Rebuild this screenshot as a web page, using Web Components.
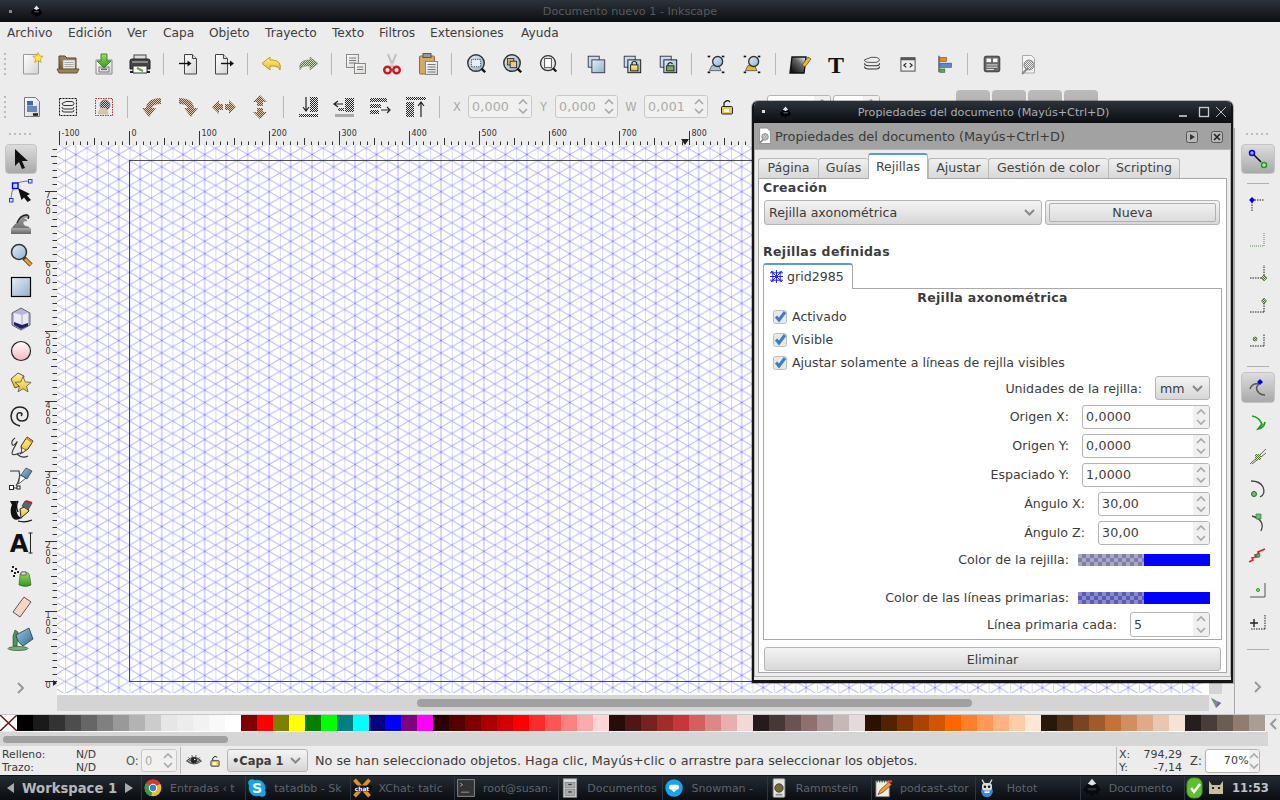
<!DOCTYPE html>
<html lang="es"><head><meta charset="utf-8"><title>Inkscape</title>
<style>
html,body{margin:0;padding:0;width:1280px;height:800px;overflow:hidden;background:#ececec;font-family:"DejaVu Sans",sans-serif;color:#3c3c3c}
</style></head><body>
<ink-app>
  <ink-titlebar>Documento nuevo 1 - Inkscape</ink-titlebar>
  <ink-menubar>
    <span style="width:61px">Archivo</span><span style="width:59px">Edición</span><span style="width:36px">Ver</span><span style="width:46px">Capa</span><span style="width:56px">Objeto</span><span style="width:67px">Trayecto</span><span style="width:47px">Texto</span><span style="width:51px">Filtros</span><span style="width:91px">Extensiones</span><span>Ayuda</span>
  </ink-menubar>
  <ink-toolbar>
    <ink-icon n="new"></ink-icon><ink-icon n="open"></ink-icon><ink-icon n="save"></ink-icon><ink-icon n="print"></ink-icon><ink-sep></ink-sep>
    <ink-icon n="import"></ink-icon><ink-icon n="export"></ink-icon><ink-sep></ink-sep>
    <ink-icon n="undo"></ink-icon><ink-icon n="redo"></ink-icon><ink-sep></ink-sep>
    <ink-icon n="copy"></ink-icon><ink-icon n="cut"></ink-icon><ink-icon n="paste"></ink-icon><ink-sep></ink-sep>
    <ink-icon n="zsel" sz="22"></ink-icon><ink-icon n="zdraw" sz="22"></ink-icon><ink-icon n="zpage" sz="20"></ink-icon><ink-sep></ink-sep>
    <ink-icon n="dup" sz="22"></ink-icon><ink-icon n="clone" sz="22"></ink-icon><ink-icon n="unlink" sz="22"></ink-icon><ink-sep></ink-sep>
    <ink-icon n="group" sz="20"></ink-icon><ink-icon n="ungroup" sz="20"></ink-icon><ink-sep></ink-sep>
    <ink-icon n="fill"></ink-icon><ink-icon n="text"></ink-icon><ink-icon n="layers" sz="20"></ink-icon><ink-icon n="xml" sz="20"></ink-icon><ink-icon n="align" sz="20"></ink-icon><ink-sep></ink-sep>
    <ink-icon n="docprops" sz="22"></ink-icon><ink-icon n="prefs"></ink-icon>
  </ink-toolbar>
  <ink-toolbar>
    <ink-icon n="selall"></ink-icon><ink-icon n="selbox"></ink-icon><ink-icon n="seldes"></ink-icon><ink-sep></ink-sep>
    <ink-icon n="rotl"></ink-icon><ink-icon n="rotr"></ink-icon><ink-icon n="fliph"></ink-icon><ink-icon n="flipv"></ink-icon><ink-sep></ink-sep>
    <ink-icon n="bot"></ink-icon><ink-icon n="low"></ink-icon><ink-icon n="rai"></ink-icon><ink-icon n="top"></ink-icon><ink-sep></ink-sep>
    <ink-coord style="width:22px;margin-right:0">X</ink-coord><ink-spin disabled style="width:64px;height:23px">0,000</ink-spin>
    <ink-coord style="width:23px">Y</ink-coord><ink-spin disabled style="width:63px;height:23px">0,000</ink-spin>
    <ink-coord style="width:26px">W</ink-coord><ink-spin disabled style="width:64px;height:23px">0,001</ink-spin>
    <ink-icon n="lock" style="width:38px"></ink-icon>
    <ink-spin style="width:64px;height:23px;margin-left:21px"></ink-spin><ink-spin style="width:47px;height:23px;margin-left:2px"></ink-spin>
    <ink-ghost style="margin-left:76px"></ink-ghost><ink-ghost></ink-ghost><ink-ghost></ink-ghost><ink-ghost></ink-ghost>
  </ink-toolbar>
  <ink-workspace>
    <ink-toolbox>
      <ink-icon n="t-sel" on></ink-icon><ink-icon n="t-node"></ink-icon><ink-icon n="t-tweak"></ink-icon><ink-icon n="t-zoom"></ink-icon><ink-icon n="t-rect"></ink-icon><ink-icon n="t-3d"></ink-icon><ink-icon n="t-arc"></ink-icon><ink-icon n="t-star"></ink-icon><ink-icon n="t-spiral"></ink-icon><ink-icon n="t-pencil"></ink-icon><ink-icon n="t-pen"></ink-icon><ink-icon n="t-callig"></ink-icon><ink-icon n="t-text"></ink-icon><ink-icon n="t-spray"></ink-icon><ink-icon n="t-eraser"></ink-icon><ink-icon n="t-bucket"></ink-icon>
    </ink-toolbox>
    <ink-center>
      <ink-canvas></ink-canvas>
    </ink-center>
    <ink-snapbar>
      <ink-icon n="s-main" on style="height:30px"></ink-icon><ink-hr style="margin:9px auto 4px"></ink-hr>
      <ink-icon n="s-a"></ink-icon><ink-icon n="s-b"></ink-icon><ink-icon n="s-c"></ink-icon><ink-icon n="s-d"></ink-icon><ink-icon n="s-e"></ink-icon><ink-hr style="margin:9px auto 5px"></ink-hr>
      <ink-icon n="s-f" on style="margin-bottom:3px"></ink-icon><ink-icon n="s-g" h></ink-icon><ink-icon n="s-h" h></ink-icon><ink-icon n="s-i" h></ink-icon><ink-icon n="s-j" h></ink-icon><ink-icon n="s-k" h></ink-icon><ink-icon n="s-l" h></ink-icon><ink-icon n="s-m" h></ink-icon><ink-hr style="margin:10px auto 0"></ink-hr>
    </ink-snapbar>
  </ink-workspace>
  <ink-palette></ink-palette>
  <ink-bottomscroll></ink-bottomscroll>
  <ink-status></ink-status>
  <ink-taskbar>
    <ink-task i="chrome">Entradas ‹ t</ink-task><ink-task i="skype">tatadbb - Sk</ink-task><ink-task i="xchat">XChat: tatic</ink-task><ink-task i="term">root@susan:</ink-task><ink-task i="cab">Documentos</ink-task><ink-task i="snow">Snowman -</ink-task><ink-task i="ramm">Rammstein</ink-task><ink-task i="pod">podcast-stor</ink-task><ink-task i="hotot" center>Hotot</ink-task><ink-task i="ink">Documento</ink-task>
  </ink-taskbar>
  <ink-dialog>
    <ink-tabs-row>
      <ink-tab style="width:60px">Página</ink-tab><ink-tab style="width:50px">Guías</ink-tab><ink-tab active style="width:60px">Rejillas</ink-tab><ink-tab style="width:60px">Ajustar</ink-tab><ink-tab style="width:120px">Gestión de color</ink-tab><ink-tab style="width:72px">Scripting</ink-tab>
    </ink-tabs-row>
    <ink-grids>
      <ink-heading style="margin-left:-1px">Creación</ink-heading>
      <ink-formline>
        <ink-combo style="width:278px;height:25px">Rejilla axonométrica</ink-combo>
        <ink-button inner style="width:175px;height:25px">Nueva</ink-button>
      </ink-formline>
      <ink-heading style="margin:18px 0 0 -1px">Rejillas definidas</ink-heading>
      <ink-inner-tab style="margin-left:-1px">grid2985</ink-inner-tab>
      <ink-gridpanel style="margin-left:-1px">
        <b>Rejilla axonométrica</b>
        <ink-check>Activado</ink-check><ink-check>Visible</ink-check><ink-check>Ajustar solamente a líneas de rejlla visibles</ink-check>
        <ink-row label="Unidades de la rejilla:" gap="13" style="height:28px"><ink-combo style="width:55px;height:24px" small>mm</ink-combo></ink-row>
        <ink-row label="Origen X:" gap="13"><ink-spin style="width:128px;height:24px">0,0000</ink-spin></ink-row>
        <ink-row label="Origen Y:" gap="13"><ink-spin style="width:128px;height:24px">0,0000</ink-spin></ink-row>
        <ink-row label="Espaciado Y:" gap="13"><ink-spin style="width:128px;height:24px">1,0000</ink-spin></ink-row>
        <ink-row label="Ángulo X:" gap="13"><ink-spin style="width:112px;height:24px">30,00</ink-spin></ink-row>
        <ink-row label="Ángulo Z:" gap="13"><ink-spin style="width:112px;height:24px">30,00</ink-spin></ink-row>
        <ink-row lift label="Color de la rejilla:" gap="9" style="height:24px;margin-top:1px"><ink-color a="#7d7da6" b="#a8a8c8"></ink-color></ink-row>
        <ink-row lift label="Color de las líneas primarias:" gap="9" style="height:24px;margin-top:14px"><ink-color a="#5c5cb8" b="#8a8acc"></ink-color></ink-row>
        <ink-row label="Línea primaria cada:" gap="13"><ink-spin style="width:80px;height:25px">5</ink-spin></ink-row>
      </ink-gridpanel>
      <ink-button style="width:457px;height:24px;margin:7px 0 0 0">Eliminar</ink-button>
    </ink-grids>
  </ink-dialog>
</ink-app>
<script>
const DEFS=`<defs>
<pattern id="k" width="2" height="2" patternUnits="userSpaceOnUse"><rect width="1" height="1" fill="#222"/><rect x="1" y="1" width="1" height="1" fill="#222"/></pattern>
<pattern id="kk" width="2" height="2" patternUnits="userSpaceOnUse"><rect width="2" height="2" fill="#ccc"/><rect width="1" height="1" fill="#333"/><rect x="1" y="1" width="1" height="1" fill="#333"/></pattern>
<pattern id="br" width="2" height="2" patternUnits="userSpaceOnUse"><rect width="2" height="2" fill="#dcc8b2"/><rect width="1" height="1" fill="#7f4a20"/><rect x="1" y="1" width="1" height="1" fill="#7f4a20"/></pattern>
<pattern id="gn" width="2" height="2" patternUnits="userSpaceOnUse"><rect width="2" height="2" fill="#cfdcc0"/><rect width="1" height="1" fill="#4f7a2a"/><rect x="1" y="1" width="1" height="1" fill="#4f7a2a"/></pattern>
<pattern id="gr" width="2" height="2" patternUnits="userSpaceOnUse"><rect width="2" height="2" fill="#eee"/><rect width="1" height="1" fill="#888"/><rect x="1" y="1" width="1" height="1" fill="#888"/></pattern>
<linearGradient id="pg" x1="0" y1="0" x2="1" y2="1"><stop offset="0" stop-color="#fff"/><stop offset="1" stop-color="#d4d4d0"/></linearGradient>
<linearGradient id="bl" x1="0" y1="0" x2="1" y2="1"><stop offset="0" stop-color="#e4eef6"/><stop offset="1" stop-color="#8fb0cf"/></linearGradient>
<linearGradient id="yl" x1="0" y1="0" x2="0" y2="1"><stop offset="0" stop-color="#fff3a0"/><stop offset="1" stop-color="#e8b820"/></linearGradient>
<linearGradient id="fo" x1="0" y1="0" x2="0" y2="1"><stop offset="0" stop-color="#a08a60"/><stop offset="1" stop-color="#6a5535"/></linearGradient>
<linearGradient id="gg" x1="0" y1="0" x2="0" y2="1"><stop offset="0" stop-color="#9be060"/><stop offset="1" stop-color="#2e9a1e"/></linearGradient>
<linearGradient id="pk" x1="0" y1="0" x2="0" y2="1"><stop offset="0" stop-color="#fff"/><stop offset="1" stop-color="#f6b6bc"/></linearGradient>
<linearGradient id="gb" x1="0" y1="0" x2="0" y2="1"><stop offset="0" stop-color="#aaa"/><stop offset="1" stop-color="#666"/></linearGradient>
<linearGradient id="bb" x1="0" y1="0" x2="1" y2="1"><stop offset="0" stop-color="#9cc8e4"/><stop offset="1" stop-color="#2e6c96"/></linearGradient>
</defs>`;
const mag=(x,y,r,c='url(#bl)')=>`<circle cx="${x}" cy="${y}" r="${r}" fill="${c}" stroke="#333" stroke-width="1.6"/>`;
const star=(cx,cy,R,f,s)=>{let p=[];for(let i=0;i<10;i++){const r=i%2?R*.45:R,a=-Math.PI/2+i*Math.PI/5;p.push((cx+r*Math.cos(a)).toFixed(1)+','+(cy+r*Math.sin(a)).toFixed(1));}return `<polygon points="${p.join(' ')}" fill="${f}" stroke="${s}" stroke-width=".8"/>`};
const ICONS={
new:`<path d="M3.5 2.5h15v18.5q0 1-1 1h-14z" fill="url(#pg)" stroke="#999"/>`+star(18,6,5.5,'#ffe84a','#c8a020'),
open:`<path d="M3 4h6l2 2h9v12H3z" fill="url(#fo)" stroke="#5a4628"/><rect x="7" y="8" width="12" height="9" fill="#e8e8e4" stroke="#999" stroke-width=".6"/><path d="M8.5 10.5h9M8.5 12.500h9M8.500 14.500h9" stroke="#999" stroke-width=".8"/><path d="M1 17h22l-2 4H3z" fill="#9a8458" stroke="#6a5535"/>`,
save:`<path d="M4 8h16v14H4z" fill="url(#pg)" stroke="#888"/><rect x="7" y="15" width="10" height="5" fill="#ddd" stroke="#555" stroke-width=".7"/><rect x="9" y="16.500" width="6" height="1.500" fill="#666"/><path d="M9 2h6v7h4l-7 7-7-7h4z" fill="url(#gg)" stroke="#2c7a1a" stroke-width=".8"/>`,
print:`<rect x="6" y="3" width="12" height="6" fill="#ddd" stroke="#444"/><path d="M2 9q0-2 2-2h16q2 0 2 2v8H2z" fill="#444" stroke="#222"/><rect x="4" y="9" width="16" height="2" fill="#888"/><path d="M5 14h14v7H5z" fill="#fff" stroke="#333"/><path d="M9 16l6 3" stroke="#6a9a4a" stroke-width="2"/><rect x="2" y="19" width="3" height="2" fill="#222"/><rect x="19" y="19" width="3" height="2" fill="#222"/>`,
import:`<path d="M8.500 2.500h8l4 4v15.500h-12z" fill="url(#pg)" stroke="#444"/><path d="M16.500 2.500v4h4" fill="#ddd" stroke="#444"/><path d="M3 11.500h11" stroke="#111" stroke-width="1.400"/><path d="M11.500 8.500l4 3-4 3z" fill="#111"/>`,
export:`<path d="M3.500 2.500h8l4 4v15.500h-12z" fill="url(#pg)" stroke="#444"/><path d="M11.500 2.500v4h4" fill="#ddd" stroke="#444"/><path d="M9 11.500h11" stroke="#111" stroke-width="1.400"/><path d="M18 8.500l4 3-4 3z" fill="#111"/>`,
undo:`<path d="M10 4L2 10.500l8 6.500v-4h4q5 0 6 4 2-9-7-10h-3z" transform="translate(0,1)" fill="url(#yl)" stroke="#c09a10"/>`,
redo:`<path d="M14 4l8 6.500-8 6.500v-4h-4q-5 0-6 4-2-9 7-10h3z" transform="translate(0,1)" fill="url(#gn)" stroke="#7a9a60" stroke-width=".6"/>`,
copy:`<rect x="2.500" y="2.500" width="12" height="13" fill="url(#pg)" stroke="#888"/><path d="M5 6h7M5 8.500h7M5 11h7" stroke="#777"/><rect x="10.500" y="11.500" width="11" height="10" fill="url(#pg)" stroke="#888"/><path d="M13 15h6M13 17.500h6" stroke="#777"/>`,
cut:`<path d="M8 2l5 13M16 2l-5 13" stroke="#aaa" stroke-width="2"/><path d="M8 2l5 13M16 2l-5 13" stroke="#eee" stroke-width=".6"/><circle cx="7.500" cy="18" r="3.300" fill="none" stroke="#c81a22" stroke-width="2.400"/><circle cx="16.500" cy="18" r="3.300" fill="none" stroke="#c81a22" stroke-width="2.400"/>`,
paste:`<rect x="3.500" y="4" width="15" height="18" rx="1" fill="#d4a868" stroke="#8a6a38"/><rect x="7" y="1.500" width="8" height="4" fill="#999" stroke="#555"/><rect x="9.500" y="9.500" width="12" height="13" fill="url(#pg)" stroke="#888"/><path d="M11.500 12.500h8M11.500 15h8M11.500 17.500h8M11.500 20h8" stroke="#777"/>`,
zsel:mag(12,11,9)+`<rect x="7" y="7" width="10" height="8" fill="#e8eef4" stroke="#333" stroke-dasharray="1 1"/><path d="M18 17l4 4" stroke="#111" stroke-width="2.600"/>`,
zdraw:mag(12,11,9)+`<rect x="7" y="6" width="7" height="7" fill="#d8b070" stroke="#333"/><rect x="10" y="9" width="7" height="7" fill="#e8c890" stroke="#333"/><path d="M18 17l4 4" stroke="#111" stroke-width="2.600"/>`,
zpage:mag(12,11,9,'#e4eaf0')+`<rect x="8" y="5.500" width="8" height="11" fill="#fff" stroke="#333"/><path d="M18 17l4 4" stroke="#111" stroke-width="2.600"/>`,
dup:`<rect x="3.500" y="3.500" width="12" height="12" fill="#c8dcf0" stroke="#334"/><rect x="7.500" y="7.500" width="14" height="14" fill="url(#bl)" stroke="#334"/>`,
clone:`<rect x="3.500" y="3.500" width="12" height="12" fill="#c8dcf0" stroke="#334"/><rect x="7.500" y="7.500" width="14" height="14" fill="url(#bl)" stroke="#111"/><rect x="10.500" y="13" width="8" height="6.500" fill="url(#yl)" stroke="#222"/><path d="M12 13v-2.500q2.500-3 5 0V13" fill="none" stroke="#222" stroke-width="1.300"/>`,
unlink:`<rect x="3.500" y="3.500" width="12" height="12" fill="#c8dcf0" stroke="#334"/><rect x="7.500" y="7.500" width="14" height="14" fill="url(#bl)" stroke="#111"/><rect x="10.500" y="14" width="8" height="5.500" fill="#7cb05c" stroke="#222"/><path d="M12 14v-2q2.500-3 5 0" fill="none" stroke="#222" stroke-width="1.300"/>`,
group:`<path d="M4 20l3-6h6l1-3 4 9z" fill="#a8c4dc" stroke="#555"/>`+mag(14,9,6)+`<g fill="#111"><rect x="2" y="2" width="3" height="2"/><rect x="19" y="2" width="3" height="2"/><rect x="2" y="21" width="3" height="2"/><rect x="19" y="21" width="3" height="2"/></g>`,
ungroup:`<path d="M4 20l3-6h6l1-3 4 9z" fill="#e8b820" stroke="#555"/>`+mag(14,9,6)+`<g fill="#111"><rect x="2" y="2" width="3" height="2"/><rect x="19" y="2" width="3" height="2"/><rect x="2" y="21" width="3" height="2"/><rect x="19" y="21" width="3" height="2"/></g>`,
fill:`<linearGradient id="bw" x1="0" y1="1" x2="1" y2="0"><stop offset="0" stop-color="#000"/><stop offset=".6" stop-color="#666"/><stop offset="1" stop-color="#fff"/></linearGradient><path d="M4 5h14l-2 16H2z" fill="url(#bw)" stroke="#111" stroke-width="1.400"/><path d="M14 13l6-8 3 2-6 8z" fill="#f2b820" stroke="#333" stroke-width=".6"/>`,
text:`<text x="12" y="20.500" text-anchor="middle" font-family="Liberation Serif" font-weight="700" font-size="24" fill="#111">T</text>`,
layers:`<path d="M3 7l8-3h6q4 1 4 3t-4 3H8Q3 10 3 7z" fill="#eee" stroke="#333"/><path d="M3 11q0 3 5 3h9q4 0 4-3M3 15q0 3 5 3h9q4 0 4-3" fill="none" stroke="#333" stroke-width="1.300"/>`,
xml:`<rect x="3.500" y="4.500" width="17" height="16" fill="#eee" stroke="#333"/><rect x="3.500" y="4.500" width="17" height="3" fill="#555"/><path d="M10 11l-3 2.500 3 2.500M14 11l3 2.500-3 2.500" fill="none" stroke="#222" stroke-width="1.300"/>`,
align:`<path d="M6 2v20" stroke="#444" stroke-width="1.500"/><rect x="7" y="4" width="8" height="5" fill="#e88a20" stroke="#8a4a10" stroke-width=".7"/><rect x="7" y="11" width="14" height="5" fill="#5a8ac8" stroke="#2a4a88" stroke-width=".7"/><rect x="7" y="18" width="6" height="4" fill="#5aa858" stroke="#2a6828" stroke-width=".7"/>`,
docprops:`<rect x="3.500" y="3.500" width="17" height="17" rx="2" fill="#666" stroke="#333"/><rect x="6" y="6" width="5" height="4" fill="#fff"/><rect x="13" y="6" width="5" height="4" fill="#fff"/><path d="M6 13h12M6 15.500h12M6 18h8" stroke="#eee"/>`,
prefs:`<path d="M6.500 3.500h9l3 3v14.500h-12z" fill="#f4f4f4" stroke="#aaa"/><circle cx="13" cy="13" r="5" fill="url(#gr)" stroke="#888"/><path d="M6 22l6-6" stroke="#888" stroke-width="2"/>`,
selall:`<path d="M4.500 2.500h11l4 4v15h-15z" fill="url(#pg)" stroke="#778"/><rect x="7" y="6" width="6" height="4.500" fill="#3a6ab0"/><path d="M7 12h10M7 14h10M7 16h10" stroke="#3a6ab0" stroke-width="1.300"/><path d="M13 19.500h5" stroke="#222" stroke-width="2.600"/>`,
selbox:`<rect x="3.500" y="3.500" width="17" height="17" fill="none" stroke="#111" stroke-dasharray="2 1"/><path d="M6 8.500l4-2h6q2 .5 2 2t-2 2H8q-2-.5-2-2z" fill="#eee" stroke="#333"/><path d="M6 12q0 2 2 2h8q2 0 2-2M6 15q0 2 2 2h8q2 0 2-2" fill="none" stroke="#333"/>`,
seldes:`<rect x="3.500" y="3.500" width="17" height="17" fill="none" stroke="#a33" stroke-dasharray="1.500 1"/><circle cx="13" cy="10" r="5" fill="url(#kk)" stroke="#888"/><path d="M6 18l3-5h5l2 6H7z" fill="#d8c8a8" stroke="#aaa" stroke-width=".5"/>`,
rotl:`<path d="M21 3q-14 0-15 10H2l7 9 7-9h-4q1-4 9-4z" fill="url(#br)"/>`,
rotr:`<path d="M3 3q14 0 15 10h4l-7 9-7-9h4q-1-4-9-4z" fill="url(#br)"/>`,
fliph:`<path d="M0 12l7-7v4h4v6H7v4zM24 12l-7-7v4h-4v6h4v4z" fill="url(#br)"/>`,
flipv:`<path d="M12 0L5 7h4v4h6V7h4zM12 24l-7-7h4v-4h6v4h4z" fill="url(#br)"/>`,
bot:`<path d="M10 2v13M7 12l3 4 3-4" fill="none" stroke="#222" stroke-width="1.200"/><rect x="14" y="2" width="8" height="15" fill="url(#k)"/><rect x="3" y="19" width="19" height="3" fill="url(#k)"/>`,
low:`<path d="M3 9h8M6 6L2 9l4 3" fill="none" stroke="#222" stroke-width="1.200"/><rect x="13" y="3" width="9" height="14" fill="url(#k)"/><rect x="6" y="13" width="6" height="3" fill="url(#k)"/><rect x="3" y="19" width="19" height="3" fill="#aaa"/>`,
rai:`<rect x="2" y="3" width="17" height="4" fill="url(#k)"/><rect x="2" y="9" width="11" height="4" fill="url(#k)"/><rect x="2" y="15" width="9" height="4" fill="url(#k)"/><path d="M13 15h8M19 12l3 3-3 3" fill="none" stroke="#222" stroke-width="1.200"/>`,
top:`<rect x="2" y="2" width="20" height="3" fill="url(#k)"/><rect x="2" y="7" width="8" height="15" fill="url(#k)"/><path d="M17 22V8M14 11l3-4 3 4" fill="none" stroke="#222" stroke-width="1.200"/>`,
lock:`<rect x="6.500" y="11.500" width="11" height="7.500" rx="1" fill="#e8c850" stroke="#222"/><path d="M9 11V8q3-4 6-1" fill="none" stroke="#222" stroke-width="1.300"/><rect x="9" y="14" width="5" height="3" fill="#fff"/>`,
't-sel':`<path d="M6 2v17l4-4 3 7 3-1-3-7h6z" fill="#111"/>`,
't-node':`<path d="M6 6Q10 2 21 2M2 21Q2 12 6 8" fill="none" stroke="#556" stroke-width=".8"/><rect x="3.500" y="4" width="5.500" height="5.500" fill="#c4d4f0" stroke="#00f" stroke-width="1.400"/><rect x="19.500" y="0.500" width="3.500" height="3.500" fill="#cdf" stroke="#23a" stroke-width=".9"/><rect x="0.500" y="19.500" width="3.500" height="3.500" fill="#cdf" stroke="#23a" stroke-width=".9"/><path d="M9 9L21 15 18 16.500 22 21 18.500 23 15 18.500 12.500 21z" fill="#111"/>`,
't-tweak':`<path d="M2 20q2-6 6-8 3-8 10-9 3 1 1 4-3-2-5 1 3-1 4 2-4-1-4 3 2 3 6 3v4z" fill="url(#gb)" stroke="#555" stroke-width=".4"/><rect x="2" y="17" width="20" height="6" fill="url(#gb)"/><path d="M8 12q3-8 10-8 3 1 1 4" fill="none" stroke="#222" stroke-width="1.300"/>`,
't-zoom':`<path d="M15 15l7 7" stroke="#333" stroke-width="4.500"/><path d="M16 16l6 6" stroke="#f0a020" stroke-width="3"/>`+`<circle cx="10" cy="9" r="7.500" fill="url(#bl)" stroke="#333" stroke-width="1.500"/>`,
't-rect':`<rect x="2.500" y="2.500" width="19" height="19" fill="url(#bl)" stroke="#000" stroke-width="1.200"/>`,
't-3d':`<path d="M12 1l9 5v12l-9 5-9-5V6z" fill="#b6b6dc" stroke="#666"/><path d="M5 6l8 2 6-2v10l-6 2-8-3z" fill="#eaeaf6"/><path d="M5 15l8 3 6-2 0 3-7 3-7-4z" fill="#20206a"/><path d="M13 8v10" stroke="#aaa"/>`,
't-arc':`<circle cx="12" cy="12" r="9.500" fill="url(#pk)" stroke="#222" stroke-width="1.200"/>`,
't-star':`<path d="M2 8l7-6 6 3-2 9-7 3z" fill="url(#yl)" stroke="#555"/>`+star(14,14,8.500,'url(#yl)','#555'),
't-spiral':`<path d="M12 13q2-2 0-3-4-1-4 3 0 5 5 5 6 0 6-7-1-7-8-7-8 0-9 9 0 8 9 10" fill="none" stroke="#222" stroke-width="1.500"/>`,
't-pencil':`<path d="M6 3q-4 3-3 6t4-1-2 5 3 6 3 0M8 19q5 5 11 2" fill="none" stroke="#333" stroke-width="1.100"/><path d="M13 18L12 11 18 2 24 6 19 14z" fill="url(#yl)" stroke="#333"/><path d="M13 18L12.500 12.500 17 15z" fill="#fff" stroke="#333" stroke-width=".7"/><path d="M17 3l6 4" stroke="#e88820" stroke-width="2"/>`,
't-pen':`<path d="M10 21H3M1 4h9q2 7-3 15" fill="none" stroke="#333" stroke-width="1.100"/><rect x="0.500" y="18.500" width="4" height="4" fill="#fff" stroke="#222"/><rect x="8" y="19" width="3" height="3" fill="#fff" stroke="#222"/><path d="M9.500 17L11 8l6 3z" fill="#fff" stroke="#333" stroke-width=".8"/><path d="M12 8l5-7 6 3-5 8z" fill="url(#bb)" stroke="#333" stroke-width=".7"/>`,
't-callig':`<path d="M1 2h7q-2 7 0 12 1 4 5 5-9 5-11-4-1-6 1-9z" fill="#111"/><path d="M9 2q-3 5 0 11" stroke="#111" fill="none" stroke-width="1.500"/><path d="M12 19L11 10l6-3 3 5z" fill="url(#yl)" stroke="#222"/><path d="M13 7l3-5 7 2-4 7z" fill="#567" stroke="#222" stroke-width=".6"/><path d="M17 2l6 2" stroke="#b22" stroke-width="2"/><path d="M9 22q7 2 14-1" fill="none" stroke="#111" stroke-width="1.300"/>`,
't-text':`<text x="10" y="21" text-anchor="middle" font-family="DejaVu Sans" font-weight="700" font-size="24" fill="#111">A</text><path d="M19.500 2h4M21.500 2v20M19.500 22h4" stroke="#222" fill="none"/>`,
't-spray':`<g fill="#222"><rect x="3" y="3" width="2" height="2"/><rect x="6" y="5" width="2" height="2"/><rect x="2" y="7" width="2" height="2"/><rect x="5" y="9" width="2" height="2"/><rect x="8" y="8" width="2" height="2"/><rect x="4" y="12" width="2" height="2"/></g><path d="M11 11q2-3 6-2 4 1 4 6l1 7q-5 3-12 0z" fill="url(#gg)" stroke="#333" stroke-width=".5"/><path d="M12 9h5v3h-5z" fill="#ddd" stroke="#333" stroke-width=".6"/>`,
't-eraser':`<path d="M15 2l7 5-11 15-7-5z" fill="#f8d4c4" stroke="#333" stroke-width=".8"/>`,
't-bucket':`<ellipse cx="9" cy="21.500" rx="10" ry="2" fill="#6cb870" stroke="#333" stroke-width=".6"/><path d="M4 9L6 3l3 2-1 14H4z" fill="#4c9a50" stroke="#222" stroke-width=".5"/><path d="M7 8l13-7 4 11-10 7q-6-4-7-11z" fill="url(#bb)" stroke="#222" stroke-width=".7"/>`,
's-main':`<circle cx="6" cy="6" r="2.500" fill="#aac" stroke="#00f" stroke-width="1.500"/><circle cx="18" cy="18" r="2.500" fill="#bdb" stroke="#292" stroke-width="1.500"/><path d="M8 8l7 7" stroke="#111" stroke-width="1.600"/>`,
's-a':`<path d="M6 7h12M6 9v10" stroke="#222" stroke-dasharray="1.500 1"/><path d="M6 4l3 3-3 3-3-3z" fill="#00f"/>`,
's-b':`<path d="M4 19h14M18 19V5" stroke="#5a8a5a" stroke-dasharray="1 1"/>`,
's-c':`<path d="M4 18h14M18 18V5" stroke="#222" stroke-dasharray="1.500 1"/><path d="M18 15l3 3-3 3-3-3z" fill="url(#gn)" stroke="#333" stroke-width=".5"/>`,
's-d':`<path d="M4 18h14M18 18V8" stroke="#222" stroke-dasharray="1.500 1"/><path d="M18 4l2.500 3-2.500 3-2.500-3z" fill="url(#gn)" stroke="#333" stroke-width=".5"/>`,
's-e':`<path d="M4 18h14M18 18V6" stroke="#222" stroke-dasharray="1.500 1"/><circle cx="9" cy="11" r="2" fill="url(#gn)" stroke="#333" stroke-width=".5"/>`,
's-f':`<path d="M4 14q2-6 9-5M13 9q-5 4 0 9 2 2 6 2" fill="none" stroke="#555" stroke-width="1.500"/><path d="M14 4l3 3-3 3-3-3z" fill="#00f"/>`,
's-g':`<path d="M6 5q7 1 10 8l-4 5q6-1 7-7" fill="none" stroke="#292" stroke-width="1.700"/>`,
's-h':`<path d="M4 20L20 5M6 20l14-11" stroke="#666"/><rect x="9" y="10" width="6" height="6" fill="url(#gn)"/>`,
's-i':`<path d="M5 4q9 0 12 6 3 7-3 10" fill="none" stroke="#444" stroke-width="1.300"/><circle cx="8" cy="17" r="2.500" fill="#7b7" stroke="#262"/>`,
's-j':`<path d="M6 5q8 2 10 8 1 3-1 7" fill="none" stroke="#444" stroke-width="1.300"/><path d="M10 3h5v5h-5z" fill="#7b7" stroke="#262" stroke-width=".6"/>`,
's-k':`<path d="M3 18l4-2-1-2 4-1-1-2 4-1-1-2 7-3" fill="none" stroke="#d22" stroke-width="1.600"/><circle cx="12" cy="11.500" r="2" fill="#5a5" stroke="#262" stroke-width=".6"/>`,
's-l':`<path d="M4 20h15V6" fill="none" stroke="#555"/><circle cx="12" cy="13" r="1.500" fill="#ada" stroke="#292"/>`,
's-m':`<path d="M5 19h14M19 19V4" stroke="#222" stroke-dasharray="1.500 1"/><path d="M4 13h8M8 9v8" stroke="#222" stroke-width="1.400"/>`,
chrome:`<circle cx="12" cy="12" r="10" fill="#e8c020"/><path d="M12 12L3.300 7A10 10 0 0 1 20.700 7z" fill="#d9392c"/><path d="M12 12L3.300 7A10 10 0 0 0 10 21.800z" fill="#3a9a48"/><circle cx="12" cy="12" r="5" fill="#fff"/><circle cx="12" cy="12" r="3.800" fill="#3c78d8"/>`,
skype:`<circle cx="12" cy="12" r="10" fill="#12a5e8"/><circle cx="6" cy="6" r="4.500" fill="#12a5e8"/><circle cx="18" cy="18" r="4.500" fill="#12a5e8"/><text x="12" y="18" text-anchor="middle" font-family="DejaVu Sans" font-weight="700" font-size="17" fill="#fff">S</text>`,
xchat:`<path d="M3 2l18 20M21 2L3 22" stroke="#e89020" stroke-width="4.500"/><rect x="0" y="9" width="24" height="7" fill="#111"/><text x="12" y="15" text-anchor="middle" font-family="DejaVu Sans" font-weight="700" font-size="7" fill="#fff">chat</text>`,
term:`<rect x="2" y="2" width="20" height="20" fill="#333" stroke="#999"/><path d="M5 6l3 2-3 2M6 17h10" stroke="#aaa" fill="none"/>`,
cab:`<rect x="4" y="1" width="16" height="22" fill="#ddd" stroke="#999"/><rect x="6" y="5" width="12" height="7" fill="#aaa" stroke="#666" stroke-width=".6"/><rect x="6" y="14" width="12" height="7" fill="#aaa" stroke="#666" stroke-width=".6"/><rect x="10" y="7" width="4" height="1.500" fill="#333"/><rect x="10" y="16" width="4" height="1.500" fill="#333"/>`,
snow:`<circle cx="12" cy="12" r="10.500" fill="#1aa4ee"/><rect x="6" y="8" width="12" height="6" rx="2.500" fill="#fff"/><path d="M9 14h6l-3 3z" fill="#fff"/>`,
ramm:`<rect x="5" y="1" width="14" height="22" rx="1" fill="#e6e6dc" stroke="#999"/><circle cx="12" cy="12" r="5" fill="#7a6a30" stroke="#333"/><rect x="8" y="19" width="8" height="2" fill="#888"/>`,
pod:`<rect x="3.500" y="3.500" width="16" height="19" fill="#f0eee0" stroke="#777"/><path d="M5 2.500v3M8 2.500v3M11 2.500v3M14 2.500v3M17 2.500v3" stroke="#333"/><path d="M6 20l3-6 10-9 3 3-10 9z" fill="#f0a030" stroke="#844"/><circle cx="21" cy="4" r="2" fill="#d33"/>`,
hotot:`<path d="M6 2l3 5M18 2l-3 5" stroke="#ddd" stroke-width="1.500"/><ellipse cx="12" cy="16" rx="7" ry="7" fill="#3a88dc"/><rect x="6" y="6" width="12" height="9" rx="4" fill="#ddd"/><circle cx="9.500" cy="10.500" r="1.500" fill="#111"/><circle cx="14.500" cy="10.500" r="1.500" fill="#111"/><path d="M9 17h6" stroke="#fff" stroke-width="2"/>`,
ink:`<path d="M12 1L2 13q-1 3 2 3l2 4 3-2 3 5 3-5 3 2 2-4q3 0 2-3z" fill="#0a0a0a"/><path d="M12 1l-5 6 5 2 5-2z" fill="#dfe6ee"/><path d="M6 12h12l-2 3H8z" fill="#2a2a3a"/>`,
logo:`<path d="M12 1L2 13q-1 3 2 3l2 4 3-2 3 5 3-5 3 2 2-4q3 0 2-3z" fill="#000"/><path d="M12 1l-5 6 5 2 5-2z" fill="#dfe6ee"/><path d="M8 11h9l-1 3H8z" fill="#3a4a68"/>`,
dock:`<path d="M5.500 2.500h9l4 4v14.500h-13z" fill="#fff" stroke="#888"/><circle cx="12" cy="13" r="4" fill="url(#gr)" stroke="#888"/><path d="M6 20l4-4" stroke="#888" stroke-width="2"/>`,
eye:`<path d="M2 12q10-10 20 0-10 8-20 0z" fill="url(#k)" stroke="#333"/><circle cx="12" cy="11" r="4" fill="#222"/><path d="M4 7l2 2M9 4l1 3M15 4l-1 3M20 7l-2 2" stroke="#333"/><circle cx="13" cy="10" r="1" fill="#fff"/>`,
cms:`<path d="M2 2l20 10-10 10z" fill="url(#kk)"/><path d="M12 22L22 12l-6-3z" fill="#7a5aa8"/><path d="M2 2l8 4 2 6z" fill="#4a9a58"/>`,
};
function def(name,tpl,init){const C=class extends HTMLElement{constructor(){super();this.attachShadow({mode:'open'}).innerHTML=typeof tpl==='string'?tpl:'';}connectedCallback(){if(init)init.call(this,this.shadowRoot);}};customElements.define(name,C);}
const F='font-family:"DejaVu Sans",sans-serif;';
def('ink-app',`<style>:host{display:block;position:relative;width:1280px;height:800px;${F}background:#ececec;color:#3c3c3c;overflow:hidden}#g{display:grid;grid-template-rows:22px 20px 43px 43px 586px 18px 14px 29px 25px;height:800px}</style><div id="g"><slot></slot></div>`);
def('ink-titlebar',`<style>:host{display:flex;align-items:center;justify-content:center;position:relative;background:linear-gradient(#2c333b,#0b0d11);color:#5a5a5a;font-size:11.200px;height:22px;padding-right:20px;box-sizing:border-box}.l{position:absolute;left:0;top:0;height:22px;display:flex;align-items:center;padding-left:9px;gap:12px}i{display:block;width:3px;height:3px;background:#888}</style><div class="l"><i></i><ink-icon n="logo" style="width:14px;height:14px;margin-left:5px" sz="13"></ink-icon></div><span><slot></slot></span>`);
def('ink-menubar',`<style>:host{display:flex;align-items:center;font-size:12.200px;padding:1px 0 0 7px;height:20px;box-sizing:border-box}::slotted(span){display:block;white-space:nowrap}</style><slot></slot>`);
def('ink-toolbar',`<style>:host{display:flex;align-items:center;height:43px;position:relative;padding-left:14px;overflow:hidden}.h{position:absolute;left:4px;top:11px;width:2px;height:22px;background:repeating-linear-gradient(#bbb 0 2px,transparent 2px 5px)}</style><div class="h"></div><slot></slot>`);
def('ink-sep',`<style>:host{display:block;width:12px;height:22px;position:relative}:host::after{content:"";position:absolute;left:4.500px;top:0;bottom:0;width:1px;background:#b8b8b8}</style>`);
def('ink-hr',`<style>:host{display:block;width:22px;height:1px;background:#b0b0b0}</style>`);
def('ink-icon',`<style>:host{display:flex;align-items:center;justify-content:center;width:36px;height:32px;flex:none;box-sizing:border-box}:host([on]){background:linear-gradient(#dcdcdc,#a8aaa8);border:1px solid #c4c4c4;border-radius:4px}svg{display:block;overflow:visible}</style><svg id="s"></svg>`,function(r){const n=this.getAttribute('n'),sz=this.getAttribute('sz')||24,s=r.getElementById('s');s.setAttribute('width',sz);s.setAttribute('height',sz);s.setAttribute('viewBox','0 0 24 24');s.innerHTML=DEFS+(ICONS[n]||'');});
def('ink-coord',`<style>:host{display:flex;align-items:center;justify-content:center;color:#aaa;font-size:11.500px;height:23px;flex:none}</style><slot></slot>`);
def('ink-ghost',`<style>:host{display:block;width:34px;height:40px;margin-right:2px;flex:none;background:linear-gradient(#bbb,#a0a0a0);border-radius:4px;align-self:flex-start;margin-top:5px}</style>`);
def('ink-spin',`<style>:host{display:inline-flex;box-sizing:border-box;border:1px solid #b4b4b4;border-radius:3px;background:#fff;font-size:12.600px;align-items:center;flex:none;color:#3c3c3c;position:relative;overflow:hidden}:host([disabled]){background:#f1f1ef;color:#aaa;border-color:#c8c8c8}.t{padding-left:3px;flex:1;letter-spacing:.2px}.a{width:16px;align-self:stretch;background:#f0f0f0;display:flex;flex-direction:column;justify-content:space-around;align-items:center}</style><span class="t"><slot></slot></span><span class="a"><svg width="10" height="7" viewBox="0 0 10 7"><path d="M1 6l4-4 4 4" fill="none" stroke="#aaa" stroke-width="1.700"/></svg><svg width="10" height="7" viewBox="0 0 10 7"><path d="M1 1l4 4 4-4" fill="none" stroke="#aaa" stroke-width="1.700"/></svg></span>`);
def('ink-workspace',`<style>:host{display:flex;height:586px;min-width:0}</style><slot></slot>`);
def('ink-toolbox',`<style>:host{display:flex;flex-direction:column;align-items:center;width:45px;flex:none;position:relative;padding:16px 3px 0 0;box-sizing:border-box}.h{position:absolute;left:9px;top:5px;width:24px;height:2px;background:repeating-linear-gradient(90deg,#bbb 0 2px,transparent 2px 5px)}.c{position:absolute;left:16px;top:554px}::slotted(ink-icon){width:32px;height:32px}::slotted(ink-icon[on]){height:30px;margin-bottom:1px}</style><div class="h"></div><slot></slot><svg class="c" width="10" height="12" viewBox="0 0 10 12"><path d="M2 1l5 5-5 5" fill="none" stroke="#999" stroke-width="2"/></svg>`);
def('ink-snapbar',`<style>:host{display:flex;flex-direction:column;align-items:center;width:46px;flex:none;box-sizing:border-box;border-left:1px solid #a8a8a8;padding-top:16px;position:relative}.h{position:absolute;left:11px;top:5px;width:24px;height:2px;background:repeating-linear-gradient(90deg,#bbb 0 2px,transparent 2px 5px)}.c{position:absolute;left:18px;top:553px}::slotted(ink-icon){width:34px;height:33.800px}::slotted(ink-icon[on]){height:31px}::slotted(ink-icon[h]){height:33.300px}</style><div class="h"></div><slot></slot><svg class="c" width="10" height="12" viewBox="0 0 10 12"><path d="M2 1l5 5-5 5" fill="none" stroke="#999" stroke-width="2"/></svg>`);
def('ink-center',`<style>:host{display:block;width:1189px;height:586px;flex:none}</style><slot></slot>`);
def('ink-canvas',`<style>:host{display:grid;grid-template-columns:12px 1152px 13px 12px;grid-template-rows:17px 550px 19px;height:586px}svg{display:block}#c{background:#fff}.vs{background:#ececec;position:relative}.vs i{position:absolute;left:0;top:538px;width:13px;height:11px;background:#d4d4d4}.tr{grid-column:2;background:#d4d4d4;height:16px;position:relative}.tr i{position:absolute;left:360px;top:4px;width:555px;height:8px;background:#a0a0a0;border-radius:4px}.ci{grid-column:3;display:flex;justify-content:center;padding-top:1px}</style>
<div></div><svg id="top" width="1177" height="17" style="grid-column:2/5"></svg><svg id="left" width="12" height="550"></svg><svg id="c" width="1152" height="550"></svg><div class="vs"><i></i></div><div></div><div></div><div class="tr"><i></i></div><div class="ci"><ink-icon n="cms" sz="12" style="width:13px;height:14px"></ink-icon></div>`,function(r){
 const t=r.getElementById('top'),l=r.getElementById('left'),c=r.getElementById('c');
 let h='';for(let i=-10;i<=1177/7;i++){const x=72.5+i*7;if(x<0||x>1177)continue;const v=i*10;const m=i%10===0?14:(i%5===0?7:3.5);h+=`<path d="M${x} ${17-m}V17" stroke="#333"/>`;if(i%10===0&&x<660)h+=`<text x="${x+2}" y="8" font-size="8" font-family="DejaVu Sans" fill="#333">${v}</text>`;}
 h+=`<path d="M624 11h8l-4 6z" fill="#222"/>`;t.innerHTML=h;
 let s='';for(let i=0;i<=80;i++){const y=536.5-i*7;if(y<0)break;const m=i%10===0?12:(i%5===0?6:4.5);s+=`<path d="M${12-m} ${y}H12" stroke="#333"/>`;if(i%10===0){[...String(i*10)].forEach((d,k)=>{s+=`<text x="3" y="${y+6.5+k*8}" text-anchor="middle" font-size="8" font-family="DejaVu Sans" fill="#333">${d}</text>`;});}}
 s+=`<path d="M8 535l4 3-4 3z" fill="#222"/>`;l.innerHTML=s;
 const d=10.74,hh=12.4;
 c.innerHTML=`<defs><pattern id="p" width="${2*d}" height="${hh}" patternUnits="userSpaceOnUse" patternTransform="translate(72.5,536.5)"><g stroke="#0000ff" stroke-opacity=".3" stroke-width="1" fill="none"><path d="M0 0V${hh}"/><path d="M${d} 0V${hh}"/><path d="M0 0L${2*d} ${hh}"/><path d="M0 ${hh}L${2*d} 0"/></g></pattern></defs><rect width="1146" height="548" fill="url(#p)"/><rect x="72.500" y="15.500" width="1200" height="521" fill="none" stroke="#333" stroke-opacity=".85"/>`;
});
const PAL=['#000','#1a1a1a','#333','#4d4d4d','#666','#808080','#999','#b3b3b3','#ccc','#e6e6e6','#ececec','#f2f2f2','#f9f9f9','#fff','#800000','#f00','#808000','#ff0','#008000','#0f0','#008080','#0ff','#000080','#00f','#800080','#f0f','#2b0000','#500','#800000','#a00','#d40000','#f00','#ff2a2a','#f55','#ff8080','#faa','#ffd5d5','#280b0b','#501616','#782121','#a02c2c','#c83737','#d35f5f','#de8787','#e9afaf','#f4d7d7','#241c1c','#483737','#6c5353','#916f6f','#ac9393','#c8b7b7','#e3dbdb','#2b1100','#520','#803300','#a40','#d45500','#f60','#ff7f2a','#f95','#ffb380','#fca','#ffe6d5','#28170b','#502d16','#784421','#a05a2c','#c87137','#d38d5f','#deaa87','#e9c6af','#f4e3d7','#241f1c','#483e37','#6c5d53','#917c6f','#ac9d93'];
def('ink-palette',`<style>:host{display:flex;height:18px;box-sizing:border-box;padding-bottom:1px;border-top:1px solid #c8c8c8;position:relative;background:#ececec}#w{display:flex;height:16px;border-bottom:1px solid #fff}#w i{display:block;width:16px;height:16px;flex:none}.x{width:17px;height:16px;flex:none;background:#fff}svg{display:block}.c{position:absolute;left:1269px;top:3px}</style><div class="x"><svg width="17" height="16"><path d="M0 0L17 16M17 0L0 16" stroke="#6a1a1a" stroke-width="1.600"/></svg></div><div id="w"></div><svg class="c" width="10" height="12" viewBox="0 0 10 12"><path d="M7 1L2 6l5 5" fill="none" stroke="#999" stroke-width="2"/></svg>`,function(r){r.getElementById('w').innerHTML=PAL.map(c=>`<i style="background:${c}"></i>`).join('');});
def('ink-bottomscroll',`<style>:host{display:block;height:14px;position:relative;background:#d6d6d6;width:1268px}i{position:absolute;left:3px;top:4px;width:225px;height:7px;background:#a0a0a0;border-radius:4px}</style><i></i>`);
def('ink-status',`<style>:host{display:flex;align-items:center;height:29px;font-size:10.800px;position:relative;box-sizing:border-box;background:#ececec}.fs{width:126px;padding-left:2px;box-sizing:border-box;display:grid;grid-template-columns:74px 1fr;line-height:13px;flex:none}.o{width:15px;font-size:11.500px;flex:none;color:#555}.v{width:1px;height:27px;background:#bbb;flex:none}ink-combo{font-weight:700;font-size:11.500px}.msg{font-size:12.770px;margin-left:7px;flex:1;white-space:nowrap}.xy{display:grid;grid-template-columns:20px 43px;line-height:13px;width:72px;padding-left:2px;box-sizing:border-box;flex:none;height:28px;border-left:1px solid #bbb;margin-right:2px;align-content:center;font-size:11px}.xy span:nth-child(even){text-align:right}.z{width:15px;flex:none;font-size:11.500px}ink-icon{width:21px;height:24px}</style>
<div class="fs"><span>Relleno:</span><span>N/D</span><span>Trazo:</span><span>N/D</span></div><span class="o">O:</span><ink-spin disabled style="width:36px;height:23px;margin-right:3px;font-size:11.500px">0</ink-spin><div class="v"></div><ink-icon n="eye" sz="18" style="margin-left:2px"></ink-icon><ink-icon n="lock" sz="18"></ink-icon><ink-combo style="width:81px;height:23px;margin-left:2px" small>•Capa 1</ink-combo><span class="msg">No se han seleccionado objetos. Haga clic, Mayús+clic o arrastre para seleccionar los objetos.</span><div class="xy"><span>X:</span><span>794,29</span><span>Y:</span><span>-7,14</span></div><span class="z">Z:</span><ink-spin style="width:55px;height:24px;margin-right:20px;font-size:11px">&nbsp;&nbsp;&nbsp;&nbsp;70%</ink-spin>`);
def('ink-taskbar',`<style>:host{display:flex;height:25px;background:linear-gradient(#242b33,#0a0d11);border-top:1px solid #111;box-sizing:border-box;align-items:stretch;overflow:hidden}.w{width:141px;flex:none;display:flex;align-items:center;color:#b4b8bc;font-weight:700;font-size:13.200px;padding-left:7px;box-sizing:border-box}.w span{margin:0 8px 0 7px}svg{display:block;flex:none}.t{width:96px;flex:none;display:flex;align-items:center;border-left:1px solid #2e363f;box-sizing:border-box}.c{color:#bfc3c7;font-weight:700;font-size:11.600px;margin-left:7px}</style>
<div class="w"><svg width="8" height="10"><path d="M7 0v10L0 5z" fill="#aaa"/></svg><span>Workspace 1</span><svg width="8" height="10"><path d="M0 0v10l8-5z" fill="#aaa"/></svg></div><slot></slot><div class="t"><svg width="20" height="24" viewBox="0 0 20 24"><rect x="2" y="2" width="15" height="20" rx="6" fill="#5dc02a" stroke="#4a9a20"/><path d="M6 12l3 4 6-8" stroke="#fff" stroke-width="2.500" fill="none"/></svg><svg width="18" height="18" viewBox="0 0 18 18" style="margin-left:2px"><path d="M2 2l3 4h8l3-4v13H2z" fill="#cbbf9a"/><rect x="5" y="8" width="2" height="2" fill="#222"/><rect x="11" y="8" width="2" height="2" fill="#222"/></svg><span class="c">11:53</span></div>`);
def('ink-task',`<style>:host{display:flex;align-items:center;width:104.300px;flex:none;box-sizing:border-box;border-left:1px solid #2e363f;color:#5d646c;font-size:11px;overflow:hidden;white-space:nowrap}ink-icon{width:22px;height:24px;margin:0 6px 0 0}.t{flex:1}:host([center]) .t{text-align:center;padding-right:40px}</style><ink-icon id="i" sz="20"></ink-icon><span class="t"><slot></slot></span>`,function(r){const e=r.getElementById('i');e.setAttribute('n',this.getAttribute('i'));e.shadowRoot.getElementById('s').innerHTML=DEFS+ICONS[this.getAttribute('i')];});
def('ink-dialog',`<style>:host{display:block;position:absolute;left:752px;top:101px;width:481px;height:582px;box-sizing:border-box;background:#ececec;border:2px solid #141414;border-top:0;border-bottom:3px solid #141414;border-radius:6px 6px 0 0;box-shadow:0 0 0 1px rgba(0,0,0,.25);font-size:12.600px;color:#3c3c3c;overflow:hidden}.tb{height:22px;margin:0 -2px;background:linear-gradient(#2c333b,#0b0d11);display:flex;align-items:center;justify-content:center;color:#a8adb3;font-size:11.200px;position:relative;padding-right:18px;box-sizing:border-box}.tb i{position:absolute;left:10px;top:9px;width:3px;height:3px;background:#ddd}.tb ink-icon{position:absolute;left:26px;top:4px;width:14px;height:14px}.w{position:absolute;right:6px;top:0;height:22px;display:flex;gap:5px;align-items:center}.w svg:first-child{margin-right:3px}.dk{height:26px;background:#a2a2a2;display:flex;align-items:center;font-size:12.900px;color:#3a3a3a;position:relative}.dk ink-icon{width:21px;height:24px}.dk svg{position:absolute;top:8px}.fr{border:1px solid #b4b4b4;height:528px;box-sizing:border-box;padding:8px 3px 0}</style>
<div class="tb"><i></i><ink-icon n="logo" sz="13"></ink-icon>Propiedades del documento (Mayús+Ctrl+D)<div class="w"><svg width="14" height="12"><path d="M3 10h8" stroke="#aaa" stroke-width="2"/></svg><svg width="12" height="12"><rect x="1.500" y="1.500" width="9" height="9" fill="none" stroke="#ccc" stroke-width="1.300"/></svg><svg width="12" height="12"><path d="M1 1l10 10M11 1L1 11" stroke="#bbb"/></svg></div></div>
<div class="dk"><ink-icon n="dock" sz="20"></ink-icon>Propiedades del documento (Mayús+Ctrl+D)<svg style="left:432px" width="12" height="12"><rect x=".500" y=".500" width="11" height="11" rx="2" fill="#b8b8b8" stroke="#555"/><path d="M4 3l5 3-5 3z" fill="#333"/></svg><svg style="left:457px" width="12" height="12"><rect x=".500" y=".500" width="11" height="11" rx="2" fill="#b8b8b8" stroke="#555"/><path d="M3 3l6 6M9 3L3 9" stroke="#222" stroke-width="1.600"/></svg></div>
<div class="fr"><slot></slot></div>`);
def('ink-tabs-row',`<style>:host{display:flex;align-items:flex-end;height:20px}</style><slot></slot>`);
def('ink-tab',`<style>:host{display:flex;align-items:center;justify-content:center;height:20px;box-sizing:border-box;background:linear-gradient(#f0f0f0,#d8d8d8);border:1px solid #b8b8b8;border-bottom:0;border-right:0;border-radius:3px 3px 0 0;font-size:12.600px;flex:none;color:#444;padding-bottom:2px}:host(:last-child){border-right:1px solid #b8b8b8}:host([active]){height:26px;background:#fff;border-top:2px solid #5b9bd5;border-left:1px solid #b8b8b8;border-right:1px solid #b8b8b8;padding-bottom:2px;z-index:1;position:relative;margin-bottom:-1px}</style><slot></slot>`);
def('ink-grids',`<style>:host{display:block;height:495px;box-sizing:border-box;background:#fff;border:1px solid #a8a8a8;padding:0 5px;position:relative}</style><slot></slot>`);
def('ink-heading',`<style>:host{display:block;font-weight:700;font-size:12.500px;color:#3c3c3c;height:17px;line-height:17px;letter-spacing:.35px}</style><slot></slot>`);
def('ink-formline',`<style>:host{display:flex;gap:3px;margin-top:4px;height:25px}</style><slot></slot>`);
def('ink-button',`<style>:host{display:flex;align-items:center;justify-content:center;box-sizing:border-box;background:linear-gradient(#f4f4f4,#d8d8d8);border:1px solid #b4b4b4;border-radius:3px;font-size:12.600px;color:#3c3c3c;flex:none}.i{display:flex;align-items:center;justify-content:center;width:100%;height:100%}:host([inner]) .i{border:1px solid #b0b0b0;border-radius:2px;margin:3px;height:calc(100% - 6px)}</style><div class="i"><slot></slot></div>`);
def('ink-combo',`<style>:host{display:flex;align-items:center;box-sizing:border-box;background:linear-gradient(#f4f4f4,#d6d6d6);border:1px solid #b4b4b4;border-radius:3px;padding:0 6px 0 4px;font-size:12.600px;color:#3c3c3c;flex:none}.t{flex:1;white-space:nowrap}svg{display:block;flex:none}</style><span class="t"><slot></slot></span><svg width="11" height="7" viewBox="0 0 11 7"><path d="M1 1l4.500 4.500L10 1" fill="none" stroke="#888" stroke-width="2"/></svg>`);
def('ink-inner-tab',`<style>:host{display:flex;align-items:center;width:90px;height:26px;box-sizing:border-box;background:#fff;border:1px solid #a8a8a8;border-top:2px solid #5b9bd5;border-bottom:0;border-radius:3px 3px 0 0;margin-top:3px;font-size:12.600px;gap:4px;padding:0 0 1px 6px;position:relative;z-index:1;margin-bottom:-1px}svg{display:block}</style><svg width="13" height="13" viewBox="0 0 14 14"><path d="M7 0v14M3 1v12M11 1v12M0 3h14M0 7h14M0 11h14M1 1l12 12M13 1L1 13" stroke="#1a1ae6" stroke-width="1" fill="none"/></svg><slot></slot>`);
def('ink-gridpanel',`<style>:host{display:block;width:459px;height:352px;box-sizing:border-box;border:1px solid #a8a8a8;background:#fff}::slotted(b){display:block;height:16px;line-height:17px;text-align:center;font-size:12.500px;letter-spacing:.3px;color:#3c3c3c}</style><slot></slot>`);
def('ink-check',`<style>:host{display:flex;align-items:center;height:23px;padding-left:9px;gap:5px;font-size:12.600px}svg{display:block;flex:none}</style><svg width="14" height="14" viewBox="0 0 14 14"><rect x=".5" y=".5" width="13" height="13" rx="2" fill="#e8e8e8" stroke="#bdbdbd"/><path d="M3 6.500l3 3.500 6-8" fill="none" stroke="#3a7ec8" stroke-width="3"/></svg><slot></slot>`);
def('ink-row',`<style>:host{display:flex;align-items:center;justify-content:flex-end;height:29px;padding-right:11px;font-size:12.640px;color:#3c3c3c}:host([lift]) #l{margin-bottom:2px}</style><span id="l"></span><slot></slot>`,function(r){const l=r.getElementById('l');l.textContent=this.getAttribute('label');l.style.marginRight=this.getAttribute('gap')+'px';});
def('ink-color',`<style>:host{display:flex;width:132px;height:12px}i{display:block;width:66px;height:12px}i+i{background:#0000ff}</style><i id="a"></i><i></i>`,function(r){const a=this.getAttribute('a'),b=this.getAttribute('b');r.getElementById('a').style.background=`conic-gradient(${a} 25%,${b} 0 50%,${a} 0 75%,${b} 0) 0 0/8px 8px`;});
</script>
</body></html>
